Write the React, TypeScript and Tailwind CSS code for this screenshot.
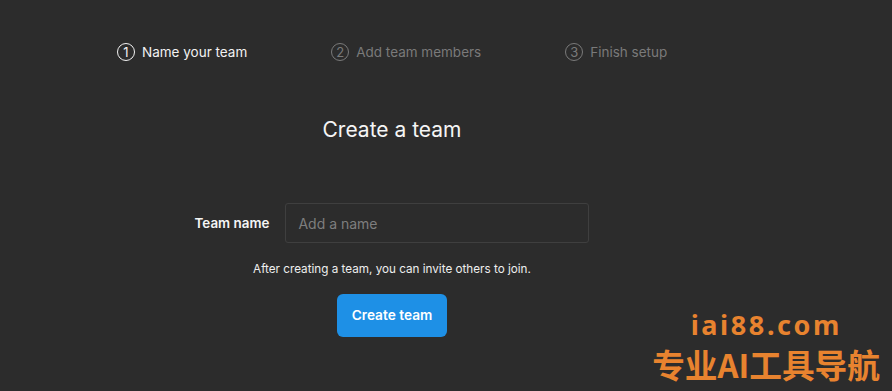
import React from "react";

function Step({ n, label, active }: { n: number; label: string; active?: boolean }) {
  return (
    <div className={`flex shrink-0 items-center gap-[7px] whitespace-nowrap ${active ? "text-[#f2f2f2]" : "text-[#7a7a7a]"}`}>
      <span
        className={`flex h-[18px] w-[18px] items-center justify-center rounded-full border-[1.5px] text-[13px] leading-none ${
          active ? "border-[#f2f2f2]" : "border-[#7a7a7a]"
        }`}
      >
        {n}
      </span>
      <span className="text-[13.5px] leading-5">{label}</span>
    </div>
  );
}

export default function App() {
  return (
    <div
      className="relative h-[391px] w-[892px] overflow-hidden bg-[#2c2c2c] text-white"
      style={{ fontFamily: "Inter, 'Noto Sans', sans-serif" }}
    >
      <div className="ml-[116px] flex w-[552px] flex-col items-center pt-[42px]">
        <div className="flex w-full items-center gap-[84px] pl-[1px]">
          <Step n={1} label="Name your team" active />
          <Step n={2} label="Add team members" />
          <Step n={3} label="Finish setup" />
        </div>
        <h1 className="mt-[54px] text-[21px] leading-7 text-[#f5f5f5]">Create a team</h1>
        <div className="mt-[59px] flex items-center gap-[16px]">
          <label className="text-[13.4px] font-semibold text-[#f5f5f5]">Team name</label>
          <input
            className="h-[40px] w-[304px] rounded-[3px] border border-[#3f3f3f] bg-transparent px-[12px] text-[14px] text-white outline-none placeholder:text-[#7e7e7e]"
            placeholder="Add a name"
          />
        </div>
        <p className="mt-[18px] text-[11.7px] leading-4 text-[#eeeeee]">
          After creating a team, you can invite others to join.
        </p>
        <button className="mt-[17px] h-[43px] w-[110px] rounded-[6px] bg-[#1e90e6] text-[13.7px] font-semibold text-white">
          Create team
        </button>
      </div>
      <div
        className="absolute right-[12px] top-[310px] flex flex-col items-end font-bold text-[#e8832f]"
        style={{ fontFamily: "'Noto Sans', 'Noto Sans CJK SC', sans-serif" }}
      >
        <div className="mr-[38px] text-[27px] leading-[30px] tracking-[2.6px]">iai88.com</div>
        <div className="mt-[6px] text-[32.7px] leading-[36px]" style={{ fontFamily: "'Noto Sans CJK SC', sans-serif" }}>
          专业AI工具导航
        </div>
      </div>
    </div>
  );
}
